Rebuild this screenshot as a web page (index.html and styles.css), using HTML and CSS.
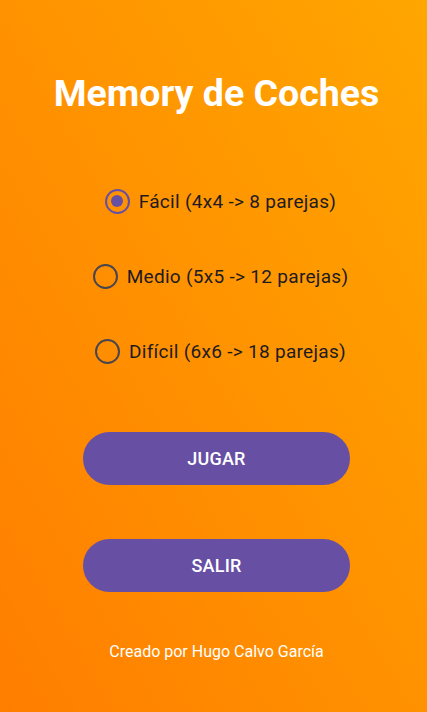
FILE: index.html
```html
<!DOCTYPE html>
<html lang="es">
<head>
<meta charset="utf-8">
<title>Memory de Coches</title>
<link rel="stylesheet" href="styles.css">
</head>
<body>
<main class="screen">
  <h1 class="title">Memory de Coches</h1>
  <div class="options">
    <label class="option"><span class="radio selected"></span><span class="label">Fácil (4x4 -&gt; 8 parejas)</span></label>
    <label class="option"><span class="radio"></span><span class="label">Medio (5x5 -&gt; 12 parejas)</span></label>
    <label class="option"><span class="radio"></span><span class="label">Difícil (6x6 -&gt; 18 parejas)</span></label>
  </div>
  <div class="buttons">
    <button class="btn">JUGAR</button>
    <button class="btn">SALIR</button>
  </div>
  <p class="footer">Creado por Hugo Calvo García</p>
</main>
</body>
</html>
```

FILE: styles.css
```css
html, body {
  margin: 0;
  padding: 0;
}
body {
  width: 427px;
  height: 712px;
  overflow: hidden;
  font-family: Roboto, "Noto Sans", sans-serif;
  background: linear-gradient(to bottom left, #ffa600, #ff7e00);
}
.screen {
  height: 712px;
  box-sizing: border-box;
  padding-left: 6px;
  display: flex;
  flex-direction: column;
  align-items: center;
}
.title {
  margin: 71px 0 0;
  font-size: 37.5px;
  line-height: 44px;
  font-weight: 700;
  color: #ffffff;
}
.options {
  margin-top: 70px;
  padding-left: 8px;
  display: flex;
  flex-direction: column;
  align-items: center;
  gap: 43px;
}
.option {
  display: flex;
  align-items: center;
  gap: 9px;
  height: 32px;
}
.radio {
  width: 25px;
  height: 25px;
  box-sizing: border-box;
  border: 2.5px solid #49454f;
  border-radius: 50%;
  display: flex;
  align-items: center;
  justify-content: center;
}
.radio.selected {
  border-color: #6750a4;
}
.radio.selected::after {
  content: "";
  width: 12px;
  height: 12px;
  border-radius: 50%;
  background: #6750a4;
}
.label {
  font-size: 19px;
  color: #1d1b20;
  letter-spacing: 0.3px;
}
.buttons {
  margin-top: 65px;
  display: flex;
  flex-direction: column;
  gap: 54px;
}
.btn {
  width: 267px;
  height: 53px;
  border: none;
  border-radius: 27px;
  background: #6750a4;
  color: #ffffff;
  font-family: Roboto, "Noto Sans", sans-serif;
  font-size: 18px;
  font-weight: 500;
  letter-spacing: 0.2px;
}
.footer {
  margin: 50px 0 0;
  font-size: 16px;
  line-height: 20px;
  color: #ffffff;
}
```
